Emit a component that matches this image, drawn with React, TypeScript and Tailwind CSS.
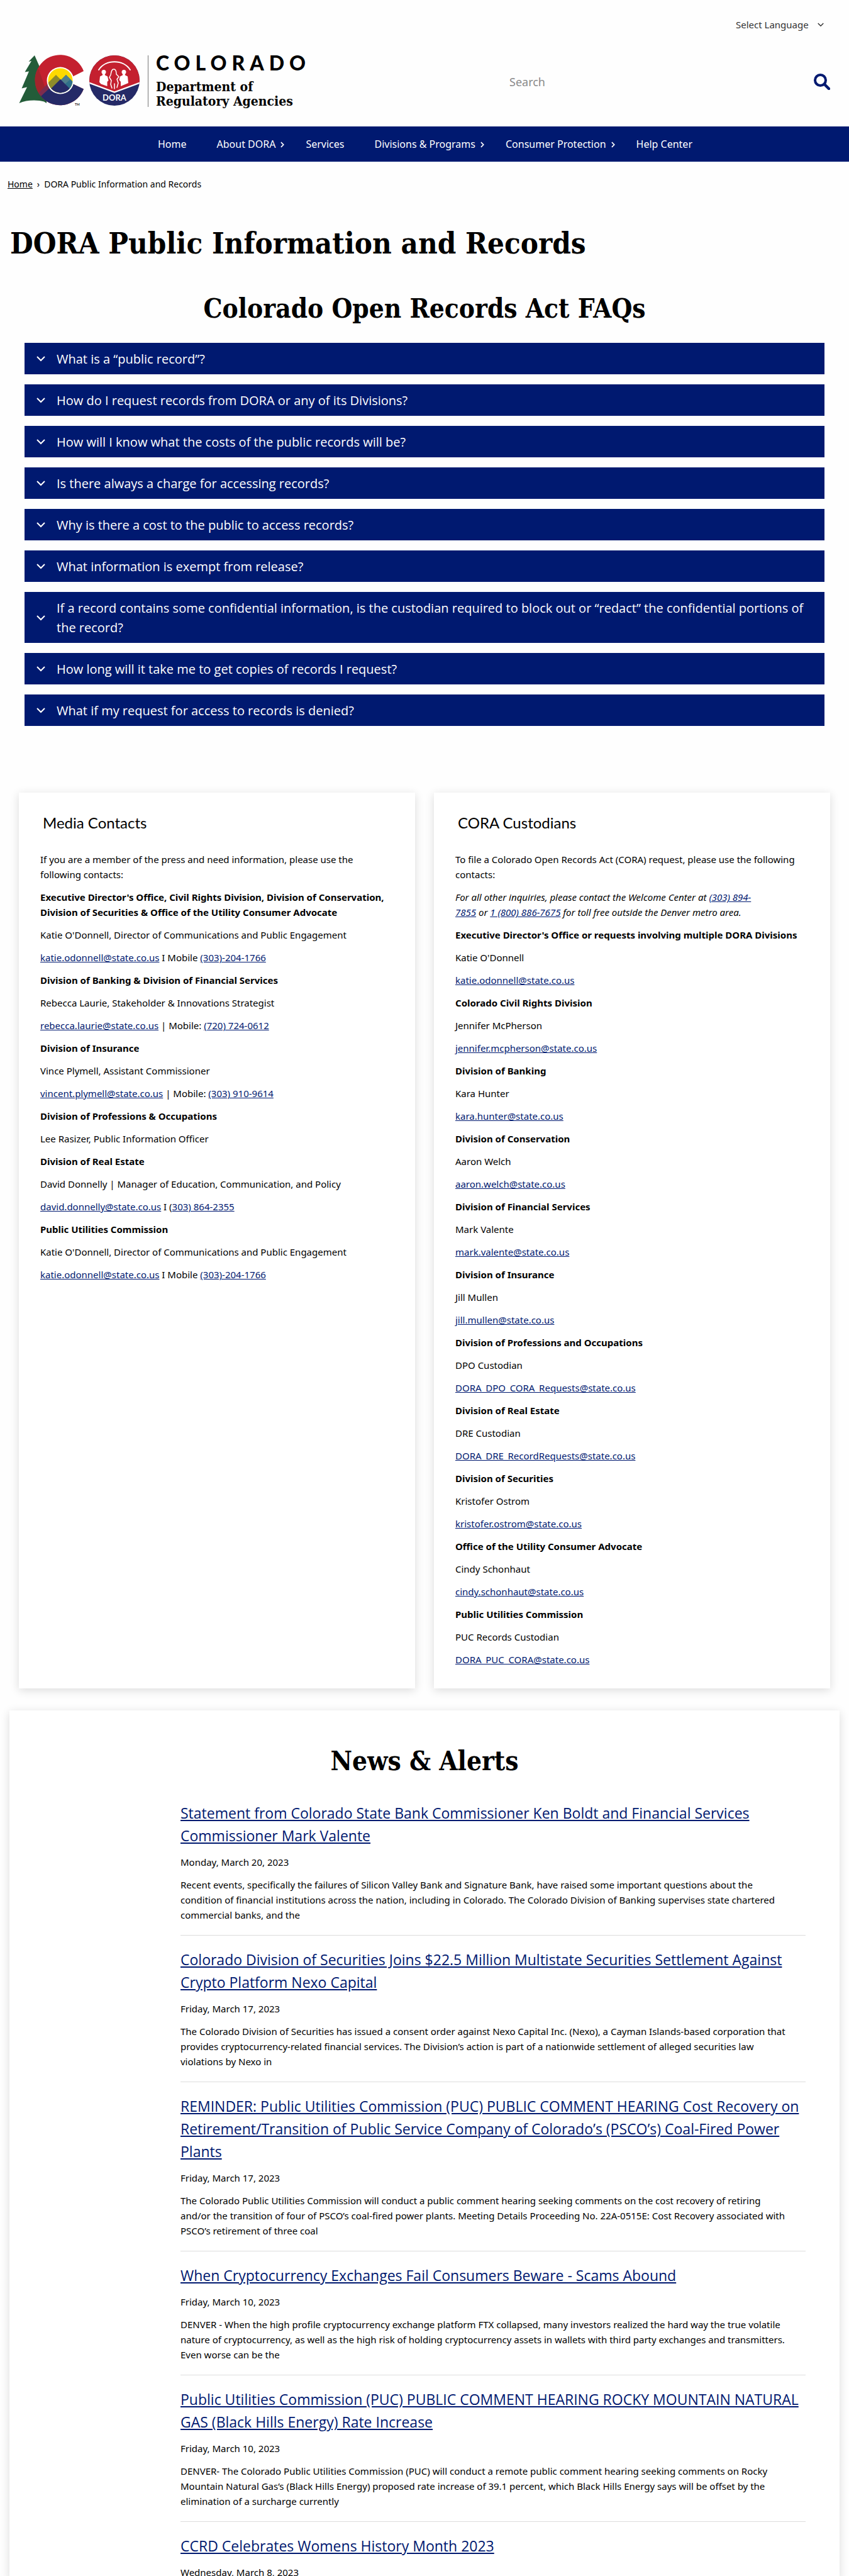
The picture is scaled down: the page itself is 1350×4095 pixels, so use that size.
import { Fragment, type ReactNode } from "react";

const body = "font-['Noto_Sans',sans-serif]";
const slab = "font-['DejaVu_Serif_Condensed','DejaVu_Serif',serif] font-bold";

const nav = [
  { label: "Home" },
  { label: "About DORA", menu: true },
  { label: "Services" },
  { label: "Divisions & Programs", menu: true },
  { label: "Consumer Protection", menu: true },
  { label: "Help Center" },
];

const faqs = [
  "What is a “public record”?",
  "How do I request records from DORA or any of its Divisions?",
  "How will I know what the costs of the public records will be?",
  "Is there always a charge for accessing records?",
  "Why is there a cost to the public to access records?",
  "What information is exempt from release?",
  "If a record contains some confidential information, is the custodian required to block out or “redact” the confidential portions of the record?",
  "How long will it take me to get copies of records I request?",
  "What if my request for access to records is denied?",
];

const custodians = [
  ["Executive Director's Office or requests involving multiple DORA Divisions", "Katie O'Donnell", "katie.odonnell@state.co.us"],
  ["Colorado Civil Rights Division", "Jennifer McPherson", "jennifer.mcpherson@state.co.us"],
  ["Division of Banking", "Kara Hunter", "kara.hunter@state.co.us"],
  ["Division of Conservation", "Aaron Welch", "aaron.welch@state.co.us"],
  ["Division of Financial Services", "Mark Valente", "mark.valente@state.co.us"],
  ["Division of Insurance", "Jill Mullen", "jill.mullen@state.co.us"],
  ["Division of Professions and Occupations", "DPO Custodian", "DORA_DPO_CORA_Requests@state.co.us"],
  ["Division of Real Estate", "DRE Custodian", "DORA_DRE_RecordRequests@state.co.us"],
  ["Division of Securities", "Kristofer Ostrom", "kristofer.ostrom@state.co.us"],
  ["Office of the Utility Consumer Advocate", "Cindy Schonhaut", "cindy.schonhaut@state.co.us"],
  ["Public Utilities Commission", "PUC Records Custodian", "DORA_PUC_CORA@state.co.us"],
];

const news: { title: string[]; date: string; text: string[] }[] = [
  {
    title: ["Statement from Colorado State Bank Commissioner Ken Boldt and Financial Services", "Commissioner Mark Valente"],
    date: "Monday, March 20, 2023",
    text: [
      "Recent events, specifically the failures of Silicon Valley Bank and Signature Bank, have raised some important questions about the",
      "condition of financial institutions across the nation, including in Colorado. The Colorado Division of Banking supervises state chartered",
      "commercial banks, and the",
    ],
  },
  {
    title: ["Colorado Division of Securities Joins $22.5 Million Multistate Securities Settlement Against", "Crypto Platform Nexo Capital"],
    date: "Friday, March 17, 2023",
    text: [
      "The Colorado Division of Securities has issued a consent order against Nexo Capital Inc. (Nexo), a Cayman Islands-based corporation that",
      "provides cryptocurrency-related financial services. The Division’s action is part of a nationwide settlement of alleged securities law",
      "violations by Nexo in",
    ],
  },
  {
    title: [
      "REMINDER: Public Utilities Commission (PUC) PUBLIC COMMENT HEARING Cost Recovery on",
      "Retirement/Transition of Public Service Company of Colorado’s (PSCO’s) Coal-Fired Power",
      "Plants",
    ],
    date: "Friday, March 17, 2023",
    text: [
      "The Colorado Public Utilities Commission will conduct a public comment hearing seeking comments on the cost recovery of retiring",
      "and/or the transition of four of PSCO’s coal-fired power plants. Meeting Details Proceeding No. 22A-0515E: Cost Recovery associated with",
      "PSCO’s retirement of three coal",
    ],
  },
  {
    title: ["When Cryptocurrency Exchanges Fail Consumers Beware - Scams Abound"],
    date: "Friday, March 10, 2023",
    text: [
      "DENVER - When the high profile cryptocurrency exchange platform FTX collapsed, many investors realized the hard way the true volatile",
      "nature of cryptocurrency, as well as the high risk of holding cryptocurrency assets in wallets with third party exchanges and transmitters.",
      "Even worse can be the",
    ],
  },
  {
    title: ["Public Utilities Commission (PUC) PUBLIC COMMENT HEARING ROCKY MOUNTAIN NATURAL", "GAS (Black Hills Energy) Rate Increase"],
    date: "Friday, March 10, 2023",
    text: [
      "DENVER- The Colorado Public Utilities Commission (PUC) will conduct a remote public comment hearing seeking comments on Rocky",
      "Mountain Natural Gas’s (Black Hills Energy) proposed rate increase of 39.1 percent, which Black Hills Energy says will be offset by the",
      "elimination of a surcharge currently",
    ],
  },
  { title: ["CCRD Celebrates Womens History Month 2023"], date: "Wednesday, March 8, 2023", text: [] },
];

function Lines({ lines }: { lines: string[] }) {
  return (
    <>
      {lines.map((line, i) => (
        <Fragment key={line}>
          {i > 0 && <br />}
          {line}
        </Fragment>
      ))}
    </>
  );
}

function Chevron({ className }: { className: string }) {
  return (
    <svg viewBox="0 0 14 9" className={className} fill="none" stroke="currentColor" strokeWidth="2" aria-hidden="true">
      <path d="M1 1l6 6 6-6" />
    </svg>
  );
}

function A({ children }: { children: ReactNode }) {
  return (
    <a href="#" className="text-[#001970] underline">
      {children}
    </a>
  );
}

function Emblem() {
  return (
    <svg viewBox="30 86 196 86" className="h-[86px] w-[196px] shrink-0" role="img" aria-label="Colorado DORA emblem">
      <path
        fill="#235c39"
        d="M55 88L66 113L62 111.500L70 134L66 132L74 156V164L70 161.500C60 158.500 42 158.500 30.500 164L43 138.500L34.500 140.500L46 113.500L39.500 114.500L50 97L45.500 98Z"
      />
      <defs>
        <clipPath id="letterC">
          <path d="M133 113A40 40 0 1 0 133 141.500L115 133V122Z" />
        </clipPath>
        <clipPath id="sun">
          <circle cx="96" cy="128" r="19.500" />
        </clipPath>
        <clipPath id="seal">
          <circle cx="182" cy="128" r="40" />
        </clipPath>
      </defs>
      <g clipPath="url(#letterC)">
        <rect x="54" y="86" width="82" height="84" fill="#c4202f" />
        <path d="M54 106L66 113L62 111.500L72 140L64 152L54 148Z" fill="#a3242c" />
        <path d="M60 149L82 127L96 152L74 164Z" fill="#7d2c4e" />
        <path d="M64 154L96 124L136 134V170H76Z" fill="#252a67" />
        <path d="M52 146L64 152L72 163L66 170H50Z" fill="#1f4a3d" />
      </g>
      <circle cx="96" cy="128" r="21.500" fill="#fff" />
      <g clipPath="url(#sun)">
        <rect x="76" y="106" width="42" height="44" fill="#fdd900" />
        <path d="M70 138L89 119L108 138L96 150H70Z" fill="#8d8b2c" />
        <path d="M86 138L105 119L124 138V150H96Z" fill="#2f6f8a" />
        <path d="M97 127L105 119L112 126L103 134Z" fill="#4f7f8c" />
        <path d="M70 152L96 126L122 152Z" fill="#252a67" />
      </g>
      <text x="119" y="168" fontSize="5" fontWeight="700" fill="#222" fontFamily="Lato, sans-serif">
        TM
      </text>
      <g clipPath="url(#seal)">
        <rect x="142" y="88" width="80" height="80" fill="#252a67" />
        <path d="M140 86H224V131L182 146.500L140 131Z" fill="#c4202f" />
        <path d="M140 131L182 146.500L224 131" fill="none" stroke="#fff" strokeWidth="2.200" />
      </g>
      <path d="M157 111C168 94 196 94 207 111" fill="none" stroke="#fff" strokeWidth="2" strokeLinecap="round" />
      <g fill="#fff">
        <circle cx="165" cy="114.500" r="3.500" />
        <path d="M163.500 116H166.500L167 119.500L171 121.500L172.500 128L170.500 130V137L160.500 133.500L158 130.500L159 121.500L163 119.500Z" />
        <circle cx="197" cy="114.500" r="3.500" />
        <path d="M195.500 116H198.500L199 119.500L203 121.500L204 132L192 137V130L189.500 127L191 121.500L195 119.500Z" />
      </g>
      <path
        d="M181 110C177 110 177 115 176 119L174 123L177 128L176 134L178 140M181 110C185 110 185 115 185 118L189 122L186 126L188 132L186 139M182 133V141"
        fill="none"
        stroke="#fff"
        strokeWidth="1.500"
        strokeLinecap="round"
        strokeLinejoin="round"
      />
      <text x="182" y="160" textAnchor="middle" fontSize="13" fontWeight="700" fill="#fff" fontFamily="Lato, sans-serif">
        DORA
      </text>
    </svg>
  );
}

function Card({ title, children }: { title: string; children: ReactNode }) {
  return (
    <section className="bg-white px-[34px] pt-[30px] pb-[34px] shadow-[0_3px_14px_rgba(0,0,0,0.14)]">
      <h3 className="pl-1 font-['Lato',sans-serif] text-2xl leading-9">{title}</h3>
      <div className="mt-7 flex flex-col gap-3 text-[15px] leading-6">{children}</div>
    </section>
  );
}

export default function App() {
  return (
    <div className={`h-screen overflow-y-auto bg-[#fefefe] text-black [scrollbar-width:none] ${body}`}>
      <header>
        <div className="flex h-[78px] items-center justify-end pr-10">
          <div className="relative flex items-center text-[15px] text-[#333]">
            <select aria-label="Select Language" className="h-8 appearance-none bg-transparent pr-6 leading-8">
              <option>Select Language</option>
            </select>
            <Chevron className="pointer-events-none absolute right-0 h-[7px] w-[10px]" />
          </div>
        </div>
        <div className="flex items-start justify-between pt-2 pb-[27px]">
          <a href="#" className="ml-[30px] flex items-stretch">
            <Emblem />
            <span className="my-0.5 ml-[9px] w-px bg-[#777]" />
            <span className="ml-3 flex flex-col">
              <span className="font-['Lato',sans-serif] text-[32px] leading-7 font-black tracking-[8px]">COLORADO</span>
              <span className={`mt-3 text-[21px] leading-[23px] ${slab}`}>
                Department of
                <br />
                Regulatory Agencies
              </span>
            </span>
          </a>
          <form className="flex h-[88px] w-2/5 items-center pr-[30px]" onSubmit={(e) => e.preventDefault()}>
            <input type="search" aria-label="Search" placeholder="Search" className="min-w-0 flex-1 text-lg outline-none placeholder:text-[#8a8a8a]" />
            <button type="submit" aria-label="Submit search" className="text-[#001970]">
              <svg viewBox="0 0 26 26" className="h-[26px] w-[26px]" fill="none" stroke="currentColor">
                <circle cx="10.500" cy="10.500" r="8.500" strokeWidth="4" />
                <path d="M17 17l7 7" strokeWidth="4.500" strokeLinecap="round" />
              </svg>
            </button>
          </form>
        </div>
        <nav className="bg-[#001970] text-base text-white">
          <ul className="flex h-14 items-center justify-center pl-[50px]">
            {nav.map((item) => (
              <li key={item.label} className="flex items-center">
                <a href="#">{item.label}</a>
                <span className="flex w-12 pl-2">
                  {item.menu && (
                    <svg viewBox="0 0 7 11" className="mt-0.5 h-[10px] w-[6px]" fill="none" stroke="currentColor" strokeWidth="2" aria-hidden="true">
                      <path d="M1 1l4.500 4.500L1 10" />
                    </svg>
                  )}
                </span>
              </li>
            ))}
          </ul>
        </nav>
      </header>

      <nav aria-label="Breadcrumb" className="flex gap-[7px] px-3 pt-6 text-sm leading-6">
        <a href="#" className="underline">
          Home
        </a>
        <span>›</span>
        <span>DORA Public Information and Records</span>
      </nav>

      <main>
        <h1 className={`px-4 pt-[52px] text-[47px] leading-[60px] ${slab}`}>DORA Public Information and Records</h1>

        <section className="px-[39px] pt-[47px]">
          <h2 className={`text-center text-[42px] leading-[54px] ${slab}`}>Colorado Open Records Act FAQs</h2>
          <ul className="mt-[27px] flex flex-col gap-4">
            {faqs.map((q) => (
              <li key={q}>
                <button
                  type="button"
                  aria-expanded="false"
                  className="flex w-full items-center gap-[18px] bg-[#001970] pt-[10px] pr-8 pb-[9px] pl-[19px] text-left font-['Open_Sans',sans-serif] text-xl leading-[31px] text-white"
                >
                  <Chevron className="h-[9px] w-[14px] shrink-0" />
                  <span>{q}</span>
                </button>
              </li>
            ))}
          </ul>
        </section>

        <div className="grid grid-cols-2 gap-[30px] px-[30px] pt-[106px]">
          <Card title="Media Contacts">
            <p>
              If you are a member of the press and need information, please use the
              <br />
              following contacts:
            </p>
            <p className="font-bold">
              Executive Director's Office, Civil Rights Division, Division of Conservation,
              <br />
              Division of Securities &amp; Office of the Utility Consumer Advocate
            </p>
            <p>Katie O'Donnell, Director of Communications and Public Engagement</p>
            <p>
              <A>katie.odonnell@state.co.us</A> I Mobile <A>(303)-204-1766</A>
            </p>
            <p className="font-bold">Division of Banking &amp; Division of Financial Services</p>
            <p>Rebecca Laurie, Stakeholder &amp; Innovations Strategist</p>
            <p>
              <A>rebecca.laurie@state.co.us</A> | Mobile: <A>(720) 724-0612</A>
            </p>
            <p className="font-bold">Division of Insurance</p>
            <p>Vince Plymell, Assistant Commissioner</p>
            <p>
              <A>vincent.plymell@state.co.us</A> | Mobile: <A>(303) 910-9614</A>
            </p>
            <p className="font-bold">Division of Professions &amp; Occupations</p>
            <p>Lee Rasizer, Public Information Officer</p>
            <p className="font-bold">Division of Real Estate</p>
            <p>David Donnelly | Manager of Education, Communication, and Policy</p>
            <p>
              <A>david.donnelly@state.co.us</A> I (<A>303) 864-2355</A>
            </p>
            <p className="font-bold">Public Utilities Commission</p>
            <p>Katie O'Donnell, Director of Communications and Public Engagement</p>
            <p>
              <A>katie.odonnell@state.co.us</A> I Mobile <A>(303)-204-1766</A>
            </p>
          </Card>
          <Card title="CORA Custodians">
            <p>
              To file a Colorado Open Records Act (CORA) request, please use the following
              <br />
              contacts:
            </p>
            <p className="italic">
              For all other inquiries, please contact the Welcome Center at{" "}
              <A>
                (303) 894-
                <br />
                7855
              </A>{" "}
              or <A>1 (800) 886-7675</A> for toll free outside the Denver metro area.
            </p>
            {custodians.map(([office, name, mail]) => (
              <Fragment key={office}>
                <p className="font-bold">{office}</p>
                <p>{name}</p>
                <p>
                  <A>{mail}</A>
                </p>
              </Fragment>
            ))}
          </Card>
        </div>

        <section className="mx-[15px] mt-[35px] bg-white pt-[54px] pr-[54px] pl-[272px] shadow-[0_3px_14px_rgba(0,0,0,0.14)]">
          <h2 className={`-ml-[218px] text-center text-[42px] leading-[54px] ${slab}`}>News &amp; Alerts</h2>
          <div className="mt-[37px]">
            {news.map((item) => (
              <article key={item.title[0]} className="mb-5 border-b border-[#ddd] pb-5 last:mb-0 last:border-0 last:pb-0">
                <h3 className="font-['Open_Sans',sans-serif] text-[23px] leading-9">
                  <A>
                    <Lines lines={item.title} />
                  </A>
                </h3>
                <p className="mt-3 text-[15px] leading-6">{item.date}</p>
                {item.text.length > 0 && (
                  <p className="mt-3 text-[15px] leading-6">
                    <Lines lines={item.text} />
                  </p>
                )}
              </article>
            ))}
          </div>
        </section>
      </main>
    </div>
  );
}
